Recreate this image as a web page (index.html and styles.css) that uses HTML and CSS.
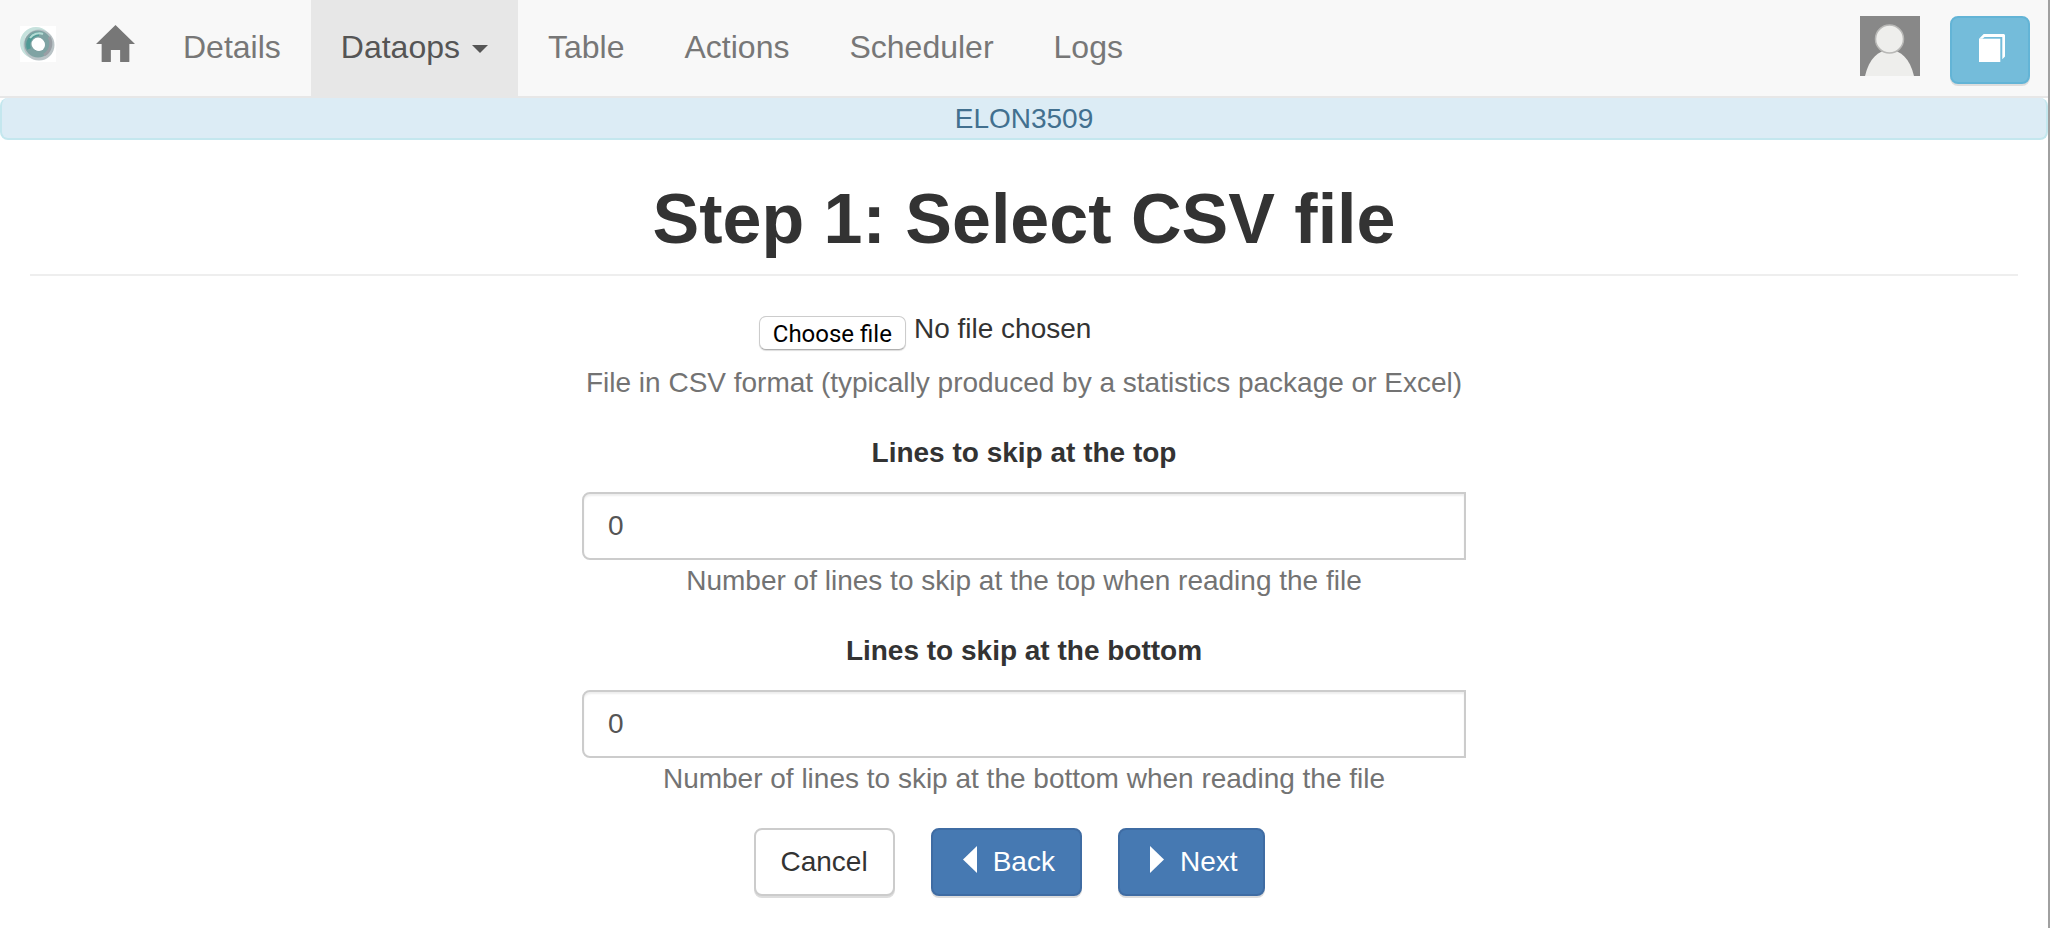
FILE: index.html
```html
<!DOCTYPE html>
<html lang="en">
<head>
<meta charset="utf-8">
<title>Step 1: Select CSV file</title>
<link rel="stylesheet" href="styles.css">
</head>
<body>
<nav class="navbar">
  <a class="brand" href="#" aria-label="OnTask">
    <svg width="36" height="36" viewBox="0 0 36 36" aria-hidden="true">
      <defs><filter id="soft"><feGaussianBlur stdDeviation="0.7"/></filter></defs>
      <rect width="36" height="36" fill="#fff"/>
      <g fill="none" filter="url(#soft)">
        <circle cx="16" cy="17" r="14" stroke="#c6e2dd" stroke-width="4"/>
        <circle cx="19" cy="19" r="13" stroke="#b9c3c6" stroke-width="5"/>
        <circle cx="18" cy="18" r="10" stroke="#7fa3a3" stroke-width="7"/>
        <path d="M9 23A11 11 0 0 1 19 8" stroke="#519a95" stroke-width="4"/>
        <path d="M29 11A13 13 0 0 1 24 29" stroke="#9a9fa5" stroke-width="3"/>
        <path d="M10 12A11 11 0 0 1 23 8" stroke="#b4dcd5" stroke-width="2"/>
      </g>
      <circle cx="19" cy="19" r="6" fill="#fff" filter="url(#soft)"/>
    </svg>
  </a>
  <a class="home" href="#" aria-label="Home">
    <svg width="39" height="37" viewBox="0 0 38 37" preserveAspectRatio="none" aria-hidden="true"><path fill="#777" d="M19 0L38 19H32.500V36.500Q32.500 37 32 37H24Q23.500 37 23.500 36.500V25H14.500V36.500Q14.500 37 14 37H6Q5.500 37 5.500 36.500V19H0Z"/></svg>
  </a>
  <a class="item" href="#">Details</a>
  <a class="item active" href="#">Dataops <span class="caret"></span></a>
  <a class="item" href="#">Table</a>
  <a class="item" href="#">Actions</a>
  <a class="item" href="#">Scheduler</a>
  <a class="item" href="#">Logs</a>
  <div class="tools">
    <a class="avatar" href="#" aria-label="Profile">
      <svg width="60" height="60" viewBox="0 0 60 60" aria-hidden="true">
        <rect width="60" height="60" fill="#888"/>
        <path fill="#eeeeec" d="M5 60C9 43 18 34 29.500 34S50 43 54 60Z"/>
        <circle cx="29.500" cy="23" r="14" fill="#eeeeec" stroke="#b8b8b6" stroke-width="1.500"/>
      </svg>
    </a>
    <button class="btn btn-info" type="button" aria-label="Documentation">
      <svg width="26" height="28" viewBox="0 0 26 28" aria-hidden="true"><g fill="#fff"><path d="M0 4.700H21.300V28H0Z"/><path d="M0 4.700L4.700 0H25L26 1V22.500L23.300 25.300V3H5.500L3.500 4.700Z"/></g></svg>
    </button>
  </div>
</nav>
<div class="alert">ELON3509</div>
<main class="content">
  <h1 class="title">Step 1: Select CSV file</h1>
  <form class="form">
    <div class="group">
      <input class="file-input" type="file" id="file">
      <label class="file" for="file"><span class="file-button">Choose file</span><span>No file chosen</span></label>
      <p class="help">File in CSV format (typically produced by a statistics package or Excel)</p>
    </div>
    <div class="group">
      <label class="label" for="top">Lines to skip at the top</label>
      <input class="control" id="top" type="text" inputmode="numeric" value="0">
      <p class="help">Number of lines to skip at the top when reading the file</p>
    </div>
    <div class="group">
      <label class="label" for="bottom">Lines to skip at the bottom</label>
      <input class="control" id="bottom" type="text" inputmode="numeric" value="0">
      <p class="help">Number of lines to skip at the bottom when reading the file</p>
    </div>
    <div class="actions">
      <button class="btn btn-default" type="button">Cancel</button>
      <button class="btn btn-primary" type="button"><svg width="14" height="28" viewBox="0 0 14 28" aria-hidden="true"><path fill="#fff" d="M14 0V27L0 13.500Z"/></svg>Back</button>
      <button class="btn btn-primary" type="submit"><svg width="14" height="28" viewBox="0 0 14 28" aria-hidden="true"><path fill="#fff" d="M0 0V27L14 13.500Z"/></svg>Next</button>
    </div>
  </form>
</main>
</body>
</html>
```
FILE: styles.css
```css
* {
  box-sizing: border-box;
}

body {
  margin: 0;
  min-height: 100vh;
  border-right: 2px solid #a0a0a0;
  background: #fff;
  color: #333;
  font-family: "Liberation Sans", Arial, sans-serif;
  font-size: 28px;
  line-height: 42px;
}

svg {
  display: block;
}

.navbar {
  display: flex;
  align-items: stretch;
  height: 98px;
  padding: 0 18px 0 20px;
  border-bottom: 2px solid #e7e7e7;
  background: #f8f8f8;
}

.brand {
  padding-top: 26px;
  margin-right: 40px;
}

.home {
  padding-top: 25px;
  margin-right: 18px;
}

.item {
  display: flex;
  align-items: center;
  gap: 12px;
  padding: 0 30px 2px;
  color: #777;
  font-size: 32px;
  text-decoration: none;
}

.active {
  background: #e7e7e7;
  color: #555;
}

.caret {
  margin-top: 4px;
  border-top: 8px solid;
  border-right: 8px solid transparent;
  border-left: 8px solid transparent;
}

.tools {
  display: flex;
  gap: 30px;
  margin-left: auto;
  padding-top: 16px;
}

.alert {
  height: 42px;
  border: 2px solid #c4e7ee;
  border-top: 0;
  border-radius: 8px;
  background: #dcecf5;
  color: #42708f;
  text-align: center;
}

.content {
  padding: 40px 30px 0;
}

.title {
  margin: 0;
  padding-bottom: 15px;
  border-bottom: 2px solid #eee;
  font-size: 70px;
  font-weight: bold;
  line-height: 79px;
  text-align: center;
}

.form {
  width: fit-content;
  margin: 0 auto;
  padding-top: 32px;
  text-align: center;
}

.group {
  margin-bottom: 28px;
}

.file-input {
  position: absolute;
  width: 1px;
  height: 1px;
  opacity: 0;
}

.file {
  display: flex;
  align-items: flex-start;
  gap: 8px;
  width: 60%;
  height: 54px;
  margin: 0 auto;
}

.file-button {
  height: 34px;
  margin-top: 8px;
  padding: 0 13px;
  border: 1px solid #ccc;
  border-bottom-color: #b0b0b0;
  border-radius: 7px;
  box-shadow: 0 1px 1px #ddd;
  background: #fff;
  color: #000;
  font-family: Roboto, sans-serif;
  font-size: 24px;
  line-height: 34px;
}

.label {
  display: block;
  margin-bottom: 18px;
  font-weight: bold;
}

.control {
  display: block;
  width: 100%;
  height: 68px;
  padding: 0 24px;
  border: 2px solid #ccc;
  border-radius: 8px 0 0 8px;
  box-shadow: inset 0 2px 2px #eee;
  background: #fff;
  color: #555;
  font: inherit;
}

.help {
  margin: 0;
  padding: 0 4px;
  color: #737373;
}

.actions {
  display: flex;
  justify-content: center;
  gap: 36px;
  padding-right: 30px;
}

.btn {
  display: flex;
  align-items: center;
  justify-content: center;
  height: 68px;
  padding: 0 25px;
  border: 2px solid;
  border-radius: 8px;
  box-shadow: 0 2px 0 #ddd;
  font: inherit;
}

.btn-default {
  border-color: #ccc;
  background: #fff;
  color: #333;
}

.btn-primary {
  gap: 16px;
  padding-left: 30px;
  border-color: #3f6ca3;
  background: #4679b2;
  color: #fff;
}

.btn-primary svg {
  margin-bottom: 4px;
}

.btn-info {
  width: 80px;
  padding: 0 0 4px 4px;
  border-color: #63b4d6;
  background: #74bcda;
}
```
